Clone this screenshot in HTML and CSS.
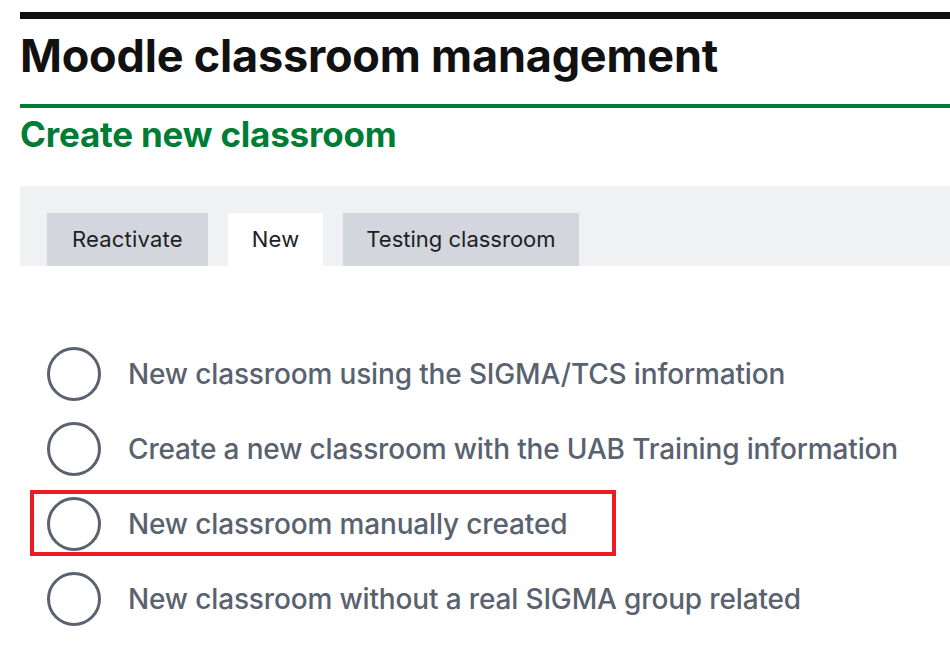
FILE: index.html
```html
<!DOCTYPE html>
<html lang="en">
<head>
<meta charset="utf-8">
<title>Moodle classroom management</title>
<link rel="stylesheet" href="styles.css">
</head>
<body>
<div class="page">
  <div class="topbar"></div>
  <h1 class="title">Moodle classroom management</h1>
  <h2 class="subtitle">Create new classroom</h2>
  <div class="tabpanel">
    <div class="tab">Reactivate</div>
    <div class="tab active">New</div>
    <div class="tab narrow">Testing classroom</div>
  </div>
  <ul class="options">
    <li class="option"><span class="radio"></span><span class="label">New classroom using the SIGMA/TCS information</span></li>
    <li class="option"><span class="radio"></span><span class="label">Create a new classroom with the UAB Training information</span></li>
    <li class="option highlighted"><span class="radio"></span><span class="label">New classroom manually created</span><span class="mark"></span></li>
    <li class="option"><span class="radio"></span><span class="label">New classroom without a real SIGMA group related</span></li>
  </ul>
</div>
</body>
</html>
```
FILE: styles.css
```css
html, body {
  margin: 0;
  padding: 0;
  background: #ffffff;
}
body {
  font-family: Inter, "Noto Sans", "DejaVu Sans", sans-serif;
  overflow: hidden;
}
.page {
  padding: 12px 0 0 20px;
}
.topbar {
  height: 7px;
  background: #111111;
}
.title {
  margin: 0;
  padding: 10px 0 22px;
  font-size: 45px;
  font-weight: 700;
  line-height: 53px;
  color: #111111;
  letter-spacing: -0.2px;
  border-bottom: 4px solid #007c35;
}
.subtitle {
  margin: 6px 0 0;
  font-size: 35px;
  line-height: 41px;
  font-weight: 700;
  color: #007c35;
  letter-spacing: -0.2px;
}
.tabpanel {
  margin-top: 31px;
  height: 53px;
  padding: 27px 0 0 27px;
  background: #f0f1f3;
  display: flex;
  gap: 20px;
}
.tab {
  height: 53px;
  padding: 0 25px 2px;
  box-sizing: border-box;
  display: flex;
  align-items: center;
  font-size: 22px;
  letter-spacing: 0.2px;
  color: #1d2125;
  background: #d3d6dd;
}
.tab.active {
  background: #ffffff;
  padding: 0 24px 2px;
}
.tab.narrow {
  padding: 0 23px 2px;
  letter-spacing: 0;
}
.options {
  list-style: none;
  margin: 70px 0 0;
  padding: 0;
}
.option {
  position: relative;
  height: 75px;
  display: flex;
  align-items: center;
  padding-left: 27px;
}
.radio {
  width: 54px;
  height: 54px;
  box-sizing: border-box;
  border: 3.5px solid #59626e;
  border-radius: 50%;
  flex: none;
}
.label {
  margin-left: 27px;
  font-size: 28px;
  letter-spacing: -0.15px;
  color: #59626e;
  font-weight: 500;
}
.mark {
  position: absolute;
  left: 10px;
  top: 4px;
  width: 586px;
  height: 66px;
  box-sizing: border-box;
  border: 4.5px solid #ed1c24;
}
```
